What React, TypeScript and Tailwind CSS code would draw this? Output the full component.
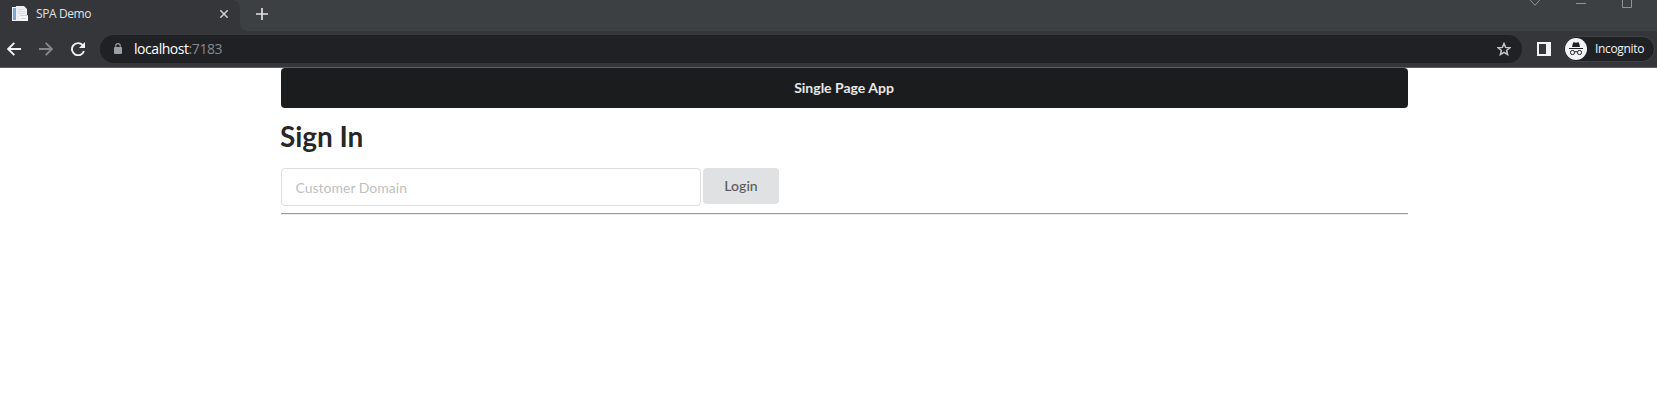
import React from 'react';

const uiFont = "font-['Open_Sans','Noto_Sans',sans-serif]";

function TabStrip() {
  return (
    <div className="flex h-[31px] bg-[#3c4043]">
      <div className="flex h-full w-[240px] items-start rounded-tr-lg bg-[#35363a] pl-3">
        <svg className="mt-[6px] shrink-0" width="16" height="16" viewBox="0 0 16 16">
          <path d="M0 1h6v14H0z" fill="#f1f3f6" />
          <path d="M1 2h3v12H1z" fill="#7ba6d6" />
          <path d="M4 0h8l3 3v12H5z" fill="#eceef1" />
          <path d="M6 3.500h5M6 5.500h7M6 7.500h7" stroke="#dadde1" />
          <path d="M8 9h8v6H8z" fill="#f5f6f8" />
          <path d="M8 9.500h8M9 12.500h5" stroke="#cdd2d8" fill="none" />
        </svg>
        <span className="ml-2 mt-[5px] w-[184px] text-[12px] leading-[18px] tracking-[-0.4px] text-[#dfe1e5]">SPA Demo</span>
        <svg className="mt-[10px] shrink-0" width="8" height="8" viewBox="0 0 8 8" stroke="#d0d2d5" strokeWidth="1.5">
          <path d="M.3.3l7.4 7.4M7.7.3L.3 7.7" />
        </svg>
      </div>
      <div className="h-full w-2 bg-[#35363a]">
        <div className="h-full rounded-bl-lg bg-[#3c4043]" />
      </div>
      <svg className="ml-2 mt-2" width="12" height="12" viewBox="0 0 12 12" stroke="#dfe1e5" strokeWidth="1.7">
        <path d="M6 0v12M0 6h12" />
      </svg>
      <div className="ml-auto flex pr-[10px]">
        <svg width="127" height="10" viewBox="0 0 127 10" fill="none" stroke="#909395">
          <path d="M10.2 0l4.8 5.3L19.8 0" />
          <path d="M56 3.5h10M102.500 0v7.500h9V0" />
        </svg>
      </div>
    </div>
  );
}

function Toolbar() {
  return (
    <div className="flex h-[37px] items-start border-b border-[#5f6063] bg-[#35363a] pt-1">
      <svg className="ml-[7px] mt-[7px] shrink-0" width="14" height="14" viewBox="0 0 14 14" fill="none" stroke="#f1f3f4" strokeWidth="1.9">
        <path d="M14 7H1.300M7.300.8L1.200 7l6.100 6.200" />
      </svg>
      <svg className="ml-[18px] mt-[7px] shrink-0" width="14" height="14" viewBox="0 0 14 14" fill="none" stroke="#85878a" strokeWidth="1.9">
        <path d="M0 7h12.700M6.700.8L12.800 7l-6.100 6.200" />
      </svg>
      <svg className="ml-[18px] mt-[7px] shrink-0" width="14" height="14" viewBox="0 0 14 14">
        <path d="M11.700 3.200A6.100 6.100 0 1 0 12.900 9" fill="none" stroke="#f1f3f4" strokeWidth="1.900" />
        <path d="M14 0v6H8z" fill="#f1f3f4" />
      </svg>
      <div className="ml-[15px] flex h-7 w-[1422px] items-start rounded-full bg-[#202124]">
        <svg className="ml-[14px] mt-2 shrink-0" width="8" height="11" viewBox="0 0 8 11">
          <path d="M1.800 5V2.800a2.200 2.200 0 0 1 4.400 0V5" fill="none" stroke="#9aa0a6" strokeWidth="1.100" />
          <rect y="4" width="8" height="7" rx="1" fill="#9aa0a6" />
        </svg>
        <span className="ml-3 mt-[4px] text-[14px] leading-5 tracking-[-0.45px] text-[#85898e]">
          <span className="text-white">localhost</span>:7183
        </span>
        <svg className="ml-auto mr-[11px] mt-[7px] shrink-0" width="14" height="14" viewBox="0 0 14 14" fill="none" stroke="#c4c7ca" strokeWidth="1.5">
          <path d="M7 1.500l1.600 3.900 4.200.3-3.200 2.700 1 4.100L7 10.300l-3.600 2.200 1-4.100-3.200-2.700 4.200-.3z" />
        </svg>
      </div>
      <svg className="ml-[15px] mt-[7px] shrink-0" width="14" height="14" viewBox="0 0 14 14">
        <path d="M0 0h14v14H0zM2 2v10h7V2z" fill="#f1f3f4" fillRule="evenodd" />
      </svg>
      <div className="ml-3 mt-px flex h-[26px] w-[92px] items-start rounded-full border border-[#414246] bg-[#202124]">
        <svg className="ml-px mt-px shrink-0" width="22" height="22" viewBox="0 0 22 22">
          <circle cx="11" cy="11" r="11" fill="#f1f3f4" />
          <path d="M7 9l1-4.300q.3-.7 1-.5l2 .5 2-.5q.7-.2 1 .5L15 9z" fill="#202124" />
          <path d="M4 10.500h14" stroke="#202124" />
          <g fill="none" stroke="#202124">
            <rect x="5.500" y="12.500" width="4" height="4" rx="1.700" />
            <rect x="12.500" y="12.500" width="4" height="4" rx="1.700" />
            <path d="M9.500 14q1.500-.7 3 0" />
          </g>
        </svg>
        <span className="ml-2 mt-[3px] text-[12px] font-medium leading-[18px] tracking-[-0.34px] text-[#f1f3f4]">Incognito</span>
      </div>
    </div>
  );
}

export default function App() {
  return (
    <div className="h-[407px] w-[1657px] overflow-hidden bg-white">
      <header className={uiFont}>
        <TabStrip />
        <Toolbar />
      </header>
      <main className="ml-[281px] w-[1127px] font-['Lato',sans-serif] text-[14px]">
        <nav className="flex h-10 items-center justify-center rounded bg-[#1b1c1d] pr-px font-bold leading-none text-white/90">
          Single Page App
        </nav>
        <h1 className="-ml-px mt-[10px] text-[28px] font-bold leading-9 tracking-[-0.05px] text-black/87">Sign In</h1>
        <form className="mt-[14px] flex items-start gap-[2px]" onSubmit={(e) => e.preventDefault()}>
          <input
            className="h-[38px] w-[420px] rounded border border-[#22242626] px-[13.5px] pt-[1px] font-normal leading-[17px] text-black/87 outline-none placeholder:text-[#bfbfbf]"
            placeholder="Customer Domain"
          />
          <button className="h-9 w-[76px] rounded bg-[#e0e1e2] font-semibold leading-none text-black/60">Login</button>
        </form>
        <hr className="mt-[7px] h-[2px] border-0 border-t border-[#9a9a9a] bg-[#eeeeee]" />
      </main>
    </div>
  );
}
